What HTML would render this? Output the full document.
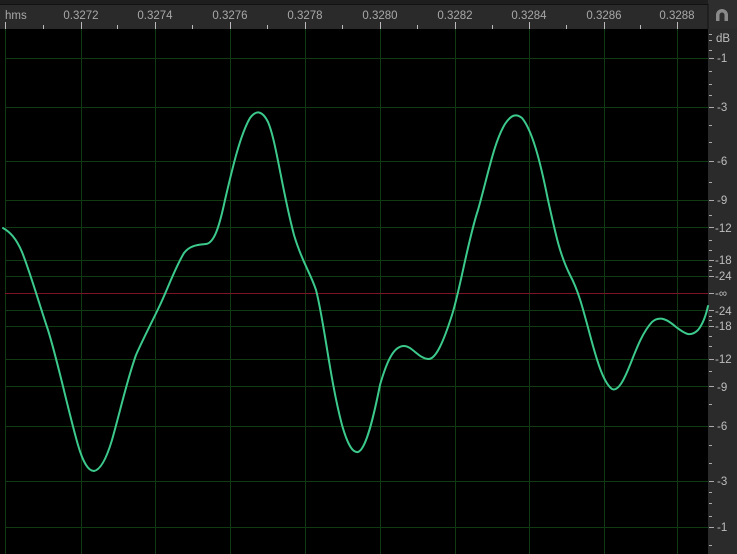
<!DOCTYPE html>
<html><head><meta charset="utf-8"><style>
html,body{margin:0;padding:0;background:#000;width:737px;height:554px;overflow:hidden;font-family:"Liberation Sans",sans-serif}
</style></head><body>
<svg width="737" height="554" xmlns="http://www.w3.org/2000/svg" style="display:block">
<rect width="737" height="554" fill="#000"/>
<rect x="0" y="0" width="708" height="29" fill="#2a2a2a"/>
<rect x="0" y="0" width="708" height="4" fill="#1e1e1e"/>
<rect x="708" y="0" width="29" height="554" fill="#2b2b2b"/>
<rect x="708" y="0" width="29" height="29" fill="#2e2e2e"/>
<line x1="708" y1="4" x2="708" y2="29" stroke="#111" />
<line x1="0" y1="4.5" x2="708" y2="4.5" stroke="#111"/>
<g font-size="11.5" fill="#a8a8a8">
<text x="5" y="19">hms</text>
<g text-anchor="middle">
<text x="81" y="19">0.3272</text><text x="155" y="19">0.3274</text><text x="230" y="19">0.3276</text>
<text x="305" y="19">0.3278</text><text x="380" y="19">0.3280</text><text x="455" y="19">0.3282</text>
<text x="529" y="19">0.3284</text><text x="604" y="19">0.3286</text><text x="677" y="19">0.3288</text>
</g></g>
<g stroke="#bbb" stroke-width="1">
<path d="M5.5 22V29M81.5 22V29M155.5 22V29M230.5 22V29M305.5 22V29M380.5 22V29M455.5 22V29M529.5 22V29M604.5 22V29M677.5 22V29"/>
<path d="M43.5 25V29M117.5 25V29M192.5 25V29M267.5 25V29M342.5 25V29M417.5 25V29M492.5 25V29M566.5 25V29M640.5 25V29"/>
</g>
<path d="M716 21V15a6 6 0 0 1 12 0V21h-3.5V15a2.5 2.5 0 0 0-5 0V21z" fill="#8a8a8a"/>
<g stroke="#0f3a12" stroke-width="1">
<path d="M5.5 29V554M81.5 29V554M155.5 29V554M230.5 29V554M305.5 29V554M380.5 29V554M455.5 29V554M529.5 29V554M604.5 29V554M677.5 29V554"/>
<path d="M5 58.5H708M5 107.5H708M5 161.5H708M5 200.5H708M5 227.5H708M5 260.5H708M5 276.5H708M5 310.5H708M5 326.5H708M5 359.5H708M5 386.5H708M5 426.5H708M5 481.5H708M5 527.5H708"/>
</g>
<line x1="5" y1="293.5" x2="708" y2="293.5" stroke="#7a1326"/>
<g fill="#bdbdbd" font-size="11.5">
<text x="716" y="42">dB</text>
<text x="717" y="62">-1</text><text x="717" y="111">-3</text><text x="717" y="165">-6</text>
<text x="717" y="204">-9</text><text x="715" y="232">-12</text><text x="715" y="264">-18</text>
<text x="715" y="280">-24</text><text x="715" y="297">-∞</text><text x="715" y="315">-24</text>
<text x="715" y="330">-18</text><text x="715" y="363">-12</text><text x="717" y="391">-9</text>
<text x="717" y="430">-6</text><text x="717" y="485">-3</text><text x="717" y="531">-1</text>
</g>
<g stroke="#aaa">
<path d="M709 34.5h3M709 40.5h3M709 50.5h3M709 58.5h5M709 71.5h3M709 84.5h3M709 95.5h3M709 107.5h5M709 125.5h3M709 142.5h3M709 161.5h5M709 182.5h3M709 200.5h5M709 215.5h3M709 227.5h5M709 240.5h3M709 250.5h3M709 260.5h5M709 266.5h3M709 270.5h3M709 276.5h5M709 293.5h5M709 310.5h5M709 316.5h3M709 320.5h3M709 326.5h5M709 336.5h3M709 346.5h3M709 359.5h5M709 371.5h3M709 386.5h5M709 404.5h3M709 426.5h5M709 445.5h3M709 463.5h3M709 481.5h5M709 492.5h3M709 503.5h3M709 516.5h3M709 527.5h5M709 545.5h3"/>
</g>
<path fill="none" stroke="#3cc98c" stroke-width="2" stroke-linejoin="round" stroke-linecap="round"
d="M3 228 C10 232 16 238 22 252 C30 272 38 300 48 330 C58 362 68 410 78 445 C83 462 88 471 94 471 C100 470 106 460 112 440 C120 412 127 380 136 355 C145 335 152 322 160 305 C168 288 175 268 184 253 C190 245 198 245 206 244 C214 243 219 228 225 200 C232 170 240 135 250 118 C256 110 262 110 268 122 C276 140 282 190 294 235 C302 262 310 272 316 290 C324 320 330 380 342 425 C348 446 353 453 358 452 C365 450 372 425 380 385 C388 357 395 346 404 346 C412 346 418 358 428 359 C436 360 444 340 452 315 C460 290 468 240 478 210 C488 175 494 142 505 124 C511 115 516 113 522 118 C532 130 540 160 548 200 C556 236 560 255 570 275 C578 290 582 305 590 335 C598 365 604 383 612 389 C618 392 624 380 630 365 C636 350 642 333 652 322 C660 315 668 320 676 327 C684 333 690 338 698 330 C703 324 706 315 708 306"/>
</svg>
</body></html>
